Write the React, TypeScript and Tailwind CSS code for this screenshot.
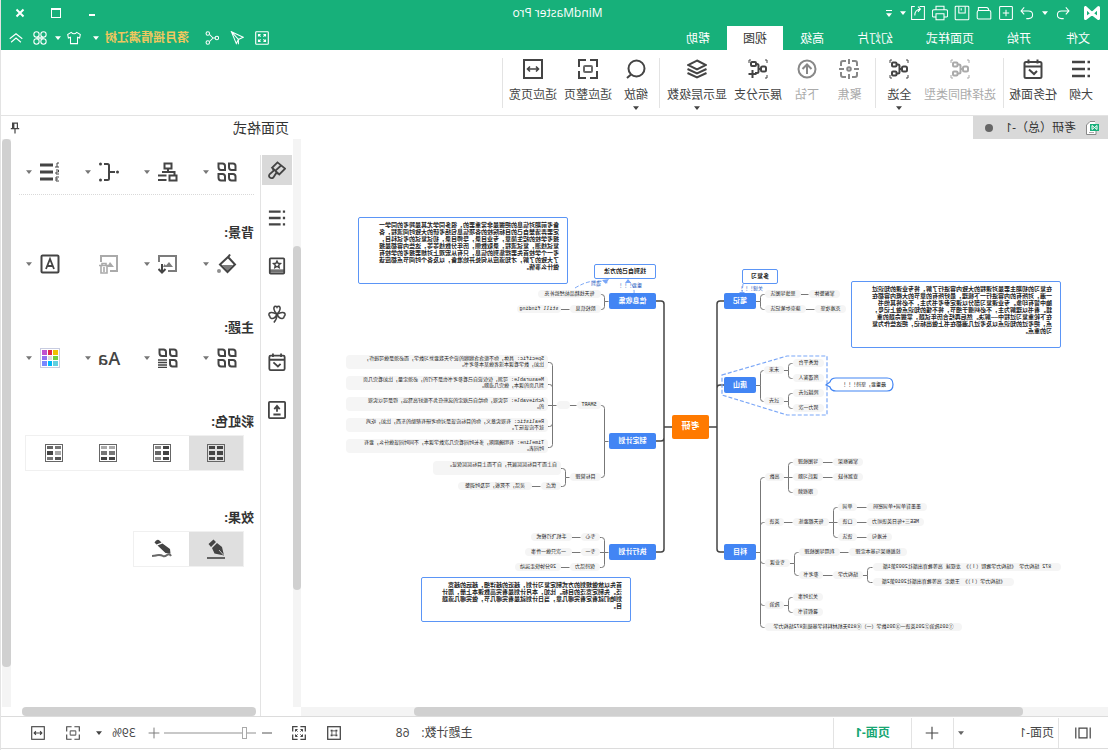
import { useState } from "react";
import type { ReactNode } from "react";
import clsx from "clsx";

type IconProps = { children: ReactNode; className?: string; stroke?: number };

function Icon({ children, className = "h-5 w-5", stroke = 2 }: IconProps) {
  return (
    <svg
      viewBox="0 0 20 20"
      className={clsx("shrink-0", className)}
      fill="none"
      stroke="currentColor"
      strokeWidth={stroke}
      aria-hidden="true"
    >
      {children}
    </svg>
  );
}

function Caret({ className = "h-1 w-1.5" }: { className?: string }) {
  return (
    <svg viewBox="0 0 8 5" className={clsx("shrink-0", className)} fill="currentColor" aria-hidden="true">
      <path d="M0 0h8L4 5z" />
    </svg>
  );
}

/* ---------- Icon drawings, all on a 20x20 grid ---------- */

const tree = (
  <>
    <rect x="2" y="7.500" width="5" height="5" rx="1.500" />
    <rect x="12.500" y="3.500" width="4.500" height="4" rx="1" />
    <rect x="12.500" y="12.500" width="4.500" height="4" rx="1" />
    <path d="M7 10h2.500M13 5.500h-2q-1.500 0-1.500 1.500v6q0 1.500 1.500 1.500h2" />
  </>
);

const icons = {
  outline: (
    <>
      <path strokeWidth="2.600" d="M6 3h13M6 10h13M6 17h13" />
      <path strokeWidth="2.600" d="M1 3h2.500M1 10h2.500M1 17h2.500" />
    </>
  ),
  task: (
    <>
      <rect x="1.500" y="3" width="17" height="16" rx="1.500" />
      <path d="M1.500 7.500h17M5.500 0.500v4M14.500 0.500v4M6 12l3 3 5-4.500" />
    </>
  ),
  same: (
    <>
      <path strokeWidth="1" d="M3 1H1v3M17 1h2v3M19 16v3h-2M3 19H1v-3" />
      {tree}
    </>
  ),
  focus: (
    <>
      <path d="M2 7V4q0-2 2-2h3M13 2h3q2 0 2 2v3M18 13v3q0 2-2 2h-3M7 18H4q-2 0-2-2v-3" />
      <path d="M10 0v5M10 15v5M0 10h5M15 10h5" />
      <circle cx="10" cy="10" r="1.800" />
    </>
  ),
  drill: (
    <>
      <circle cx="10" cy="10" r="8.500" />
      <path d="M10 15V6M5.500 10L10 5.500l4.500 4.500" />
    </>
  ),
  expand: (
    <>
      <path strokeWidth="1" d="M3 1H1v3M17 1h2v3M3 19H1v-3" />
      <rect x="2" y="7.500" width="5" height="5" rx="1.500" />
      <rect x="12" y="3" width="5" height="4" rx="1" />
      <path d="M7 10h2.500M12 5h-1q-1.500 0-1.500 1.500v6q0 1.500 1.500 1.500h2M15.500 11v8M11.500 15h8" />
    </>
  ),
  layers: (
    <>
      <path d="M10 1.500L1 6l9 4.500L19 6z" />
      <path d="M0.500 10L10 14.500 19.500 10M0.500 14L10 18.500 19.500 14" />
    </>
  ),
  zoom: (
    <>
      <circle cx="9.500" cy="9.500" r="8" />
      <path d="M15 15.500l4 3.500" />
    </>
  ),
  fitPage: (
    <>
      <path d="M1 8V1h7M12 1h7v7M19 12v7h-7M8 19H1v-7" />
      <rect x="6" y="7" width="8" height="6" rx="1" opacity="0.8" />
    </>
  ),
  fitWidth: (
    <>
      <rect x="1" y="1" width="18" height="18" />
      <path d="M5 10h10M7 7.500L4.500 10 7 12.500M13 7.500l2.500 2.500-2.500 2.500" strokeWidth="1.600" />
    </>
  ),
  brush: (
    <>
      <path d="M9.500 1.500L1 8.500 7.500 15l8-7.500z" />
      <path d="M5.500 5l6.500 6M14.500 9l-.5 2 4 3.500q2 2.500-.5 4t-4-1L11 13.500l-2 .5" />
    </>
  ),
  star: (
    <>
      <rect x="2" y="1.500" width="16" height="17" rx="1" />
      <path d="M2 14.500h16M2 16.500h16" strokeWidth="1.400" />
      <path d="M10 4.500l1.200 2.500 2.600.300-1.900 1.800.500 2.600-2.400-1.300-2.400 1.300.500-2.600-1.900-1.800 2.600-.300z" strokeWidth="1.600" />
    </>
  ),
  clover: (
    <>
      <path d="M10 10C5.500 6.500 6 1.500 8 1.500q1.500 0 2 1 .5-1 2-1c2 0 2.500 5-2 8.500z" strokeWidth="1.700" />
      <path d="M10 10.500C5 7 1 8 1 10.500q0 1.500 1 2 0 2 2 2.500c3 .5 4.500-1.500 6-4.500z" strokeWidth="1.700" />
      <path d="M10 10.500c5-3.500 9-2.500 9 0q0 1.500-1 2 0 2-2 2.500c-3 .5-4.500-1.500-6-4.500zM10 10.500q0 5 3.500 9" strokeWidth="1.700" />
    </>
  ),
  upload: (
    <>
      <rect x="1" y="1" width="18" height="18" rx="1" />
      <path d="M10 12V6.500M7 9l3-3.500L13 9M6 15h8" />
    </>
  ),
  grid: (
    <path d="M1.500 4q0-2.500 2.500-2.500h4v3.500q0 3-2.500 3h-4zM12 4q0-2.500 2.500-2.500h4v3.500q0 3-2.500 3h-4zM1.500 14.500q0-2.500 2.500-2.500h4v3.500q0 3-2.500 3h-4zM12 14.500q0-2.500 2.500-2.500h4v3.500q0 3-2.500 3h-4z" />
  ),
  gridLines: (
    <>
      <path d="M1.500 4q0-2.500 2.500-2.500h4v3.500q0 3-2.500 3h-4zM12 4q0-2.500 2.500-2.500h4v3.500q0 3-2.500 3h-4zM1.500 14.500q0-2.500 2.500-2.500h4v3.500q0 3-2.500 3h-4z" />
      <path d="M11 12h9M11 14.500h9M11 17h9M11 19.500h9" strokeWidth="1.300" />
    </>
  ),
  org: (
    <>
      <rect x="6.500" y="1.500" width="7" height="5" />
      <path d="M10 6.500v3.500M3.500 13.500V10h12.500M11.500 13.500H20M11.500 18H20" />
      <rect x="1.500" y="13.500" width="7" height="5" />
    </>
  ),
  connector: (
    <>
      <path d="M4 10h6M15 2h-3.500q-1.500 0-1.500 1.500v13q0 1.500 1.500 1.500H15" />
      <g fill="currentColor" stroke="none">
        <circle cx="1.500" cy="10" r="1.500" />
        <circle cx="18.500" cy="2" r="1.500" />
        <circle cx="18.500" cy="18" r="1.500" />
      </g>
    </>
  ),
  numbering: (
    <>
      <path strokeWidth="3" d="M7 3h13M7 10h13M7 17h13" />
      <path strokeWidth="1" d="M1 1h2v4M1 5h4M4 8H1.500v2H4v2H1M1 15h3v4H1M2 17h2" />
    </>
  ),
  fill: (
    <>
      <path d="M7 0.500l2 3M9 3L17 10.500 9.500 18 2 10.500z" />
      <path d="M4 11h11l-5.500 6z" fill="currentColor" stroke="none" opacity="0.7" />
      <circle cx="18" cy="17" r="2" fill="currentColor" stroke="none" opacity="0.6" />
    </>
  ),
  picture: (
    <>
      <path d="M19 8V2H2v15h8" opacity="0.7" />
      <path d="M5 13l4-5 3 3.500 1.500-1.500 1.500 3z" fill="currentColor" stroke="none" opacity="0.7" />
      <path d="M16 10v8M12.500 15l3.500 3.500 3.500-3.500" />
    </>
  ),
  pictureDelete: (
    <>
      <path d="M18 8V2H2v15h7" />
      <path d="M5 13l4-5 3 5z" fill="currentColor" stroke="none" />
      <path d="M10.500 11.500h9.500M13 11V9.500h4V11M12 12v7h6v-7M15 13v5" strokeWidth="1.600" />
    </>
  ),
  watermark: (
    <>
      <rect x="1.500" y="1.500" width="17" height="17" rx="1" />
      <path d="M6 15l4-10 4 10M7.500 12h5" strokeWidth="1.800" />
    </>
  ),
  pen: (
    <>
      <path d="M17.500 5L12.500 0.500 10 3l5 5zM9 4l5 5-2.500 5.500L2 16.500 4 8z" fill="currentColor" stroke="none" />
      <path d="M2.500 16l4.500-5" stroke="#dfdfdf" strokeWidth="0.800" />
      <path d="M1 19h18" opacity="0.8" />
    </>
  ),
  pencil: (
    <>
      <path d="M12 2q3-3 5.500 1.500L15.500 5.500 10.500 3.500zM9.500 4.500l5 2L6.500 14l-5 .5L2 10z" fill="currentColor" stroke="none" />
      <path d="M1 17q1.500-3 4-1t4 1 4-1 3 .5l4 .5" opacity="0.8" />
    </>
  ),
  frame: (
    <>
      <rect x="1" y="1" width="18" height="18" />
      <path d="M6 8V6h2M12 6h2v2M14 12v2h-2M8 14H6v-2" strokeWidth="1.600" />
      <rect x="7" y="7" width="6" height="6" strokeWidth="1.200" />
    </>
  ),
  full: (
    <>
      <path d="M1 8V1h7M12 1h7v7M19 12v7h-7M8 19H1v-7" />
      <path d="M5 8V5h3M5 5l3 3M12 5h3v3M15 5l-3 3M15 12v3h-3M15 15l-3-3M8 15H5v-3M5 15l3-3" strokeWidth="1.400" />
    </>
  ),
};

type IconName = keyof typeof icons;

/* ---------- Title bar ---------- */

const quickActions = [
  { label: "新建", draw: <><rect x="2" y="2" width="16" height="16" rx="1" /><path d="M10 6v8M6 10h8" /></> },
  { label: "打开", draw: <><path d="M1.500 17V9q0-2 2-2h13q2 0 2 2v7q0 1.500-1.500 1.500H2zM4 7q0-4 3-4h10v4" /></> },
  { label: "保存", draw: <><rect x="1.500" y="1.500" width="17" height="17" rx="1" /><path d="M6 2v8h8V2M11 4v3" /></> },
  { label: "打印", draw: <><path d="M5 6V1.500h10V6M5 15H2q-1.500 0-1.500-1.500V8Q.5 6 2.500 6h15q2 0 2 2v5.500Q19.500 15 18 15h-3M5 11h10v7.500H5z" /></> },
  { label: "导出", draw: <><path d="M8 2H2v16h16V2h-4M14 13Q14 6 7 5M10 2L7 5l3 3.500" /></> },
];

const menus = ["文件", "开始", "页面样式", "幻灯片", "高级", "视图", "帮助"];

function TitleBar() {
  const [active, setActive] = useState("视图");

  return (
    <header className="bg-[#17b07a] text-white">
      <div className="flex h-[26px] items-center justify-between">
        <div className="flex flex-1 items-center pl-2">
          <svg viewBox="0 0 16 14" className="mr-3.5 h-3.5 w-4" fill="none" stroke="white" strokeWidth="3" strokeLinejoin="round" aria-hidden="true">
            <path d="M1.500 12.500v-11l6.500 6 6.500-6v11L8 7.500z" />
          </svg>
          <button aria-label="撤销" className="mr-2">
            <Icon className="h-3.5 w-3.5" stroke={1.5}><path d="M6 2L1.500 7 6 12M2 7h10q6 0 6 5.500T12 18H9" /></Icon>
          </button>
          <button aria-label="撤销列表"><Caret /></button>
          <button aria-label="重做" className="ml-2">
            <Icon className="h-3.5 w-3.5" stroke={1.5}><path d="M14 2l4.500 5L14 12M18 7H8q-6 0-6 5.500T8 18h3" /></Icon>
          </button>
          <div className="ml-1.5 flex gap-1.5">
            {quickActions.map((a) => (
              <button key={a.label} aria-label={a.label}>
                <Icon className="h-4 w-4" stroke={1.3}>{a.draw}</Icon>
              </button>
            ))}
          </div>
          <button aria-label="导出列表" className="ml-1"><Caret /></button>
          <button aria-label="自定义" className="ml-2 flex flex-col items-center gap-0.5">
            <span className="h-px w-1.5 bg-white" />
            <Caret />
          </button>
        </div>
        <h1 className="text-xs leading-5">MindMaster Pro</h1>
        <div className="flex flex-1 items-center justify-end gap-[26px] pr-3.5">
          <button aria-label="最小化" className="w-2.5"><span className="mx-auto mt-1 block h-0.5 w-1.5 bg-white" /></button>
          <button aria-label="最大化" className="h-2.5 w-2.5 border border-t-2 border-white" />
          <button aria-label="关闭"><Icon className="h-2.5 w-2.5" stroke={4}><path d="M3 3l14 14M17 3L3 17" /></Icon></button>
        </div>
      </div>
      <div className="flex h-6 items-stretch justify-between">
        <nav className="flex gap-px pl-0.5">
          {menus.map((m) => (
            <button
              key={m}
              onClick={() => setActive(m)}
              className={clsx(
                "px-4 pt-0.5 text-xs first:mr-0.5",
                m === active && "bg-white text-[#333]"
              )}
            >
              {m}
            </button>
          ))}
        </nav>
        <div className="flex items-center pr-2">
          <button aria-label="全屏">
            <Icon className="h-3.5 w-3.5" stroke={1.6}>
              <rect x="1" y="1" width="18" height="18" rx="1" />
              <path d="M5 8V5h3M5 5l3 3M12 5h3v3M15 5l-3 3M15 12v3h-3M15 15l-3-3M8 15H5v-3M5 15l3-3" />
            </Icon>
          </button>
          <button aria-label="发送" className="ml-[11px]">
            <Icon className="h-3.5 w-3.5" stroke={1.5}><path d="M18 1L1 9l7 3 3 6zM18 1L8 12v7" /></Icon>
          </button>
          <button aria-label="分享" className="ml-[11px]">
            <Icon className="h-3.5 w-3.5" stroke={1.5}>
              <circle cx="3" cy="10" r="2.500" /><circle cx="16" cy="3.500" r="2.500" /><circle cx="16" cy="16.500" r="2.500" />
              <path d="M5.500 10h3l5-5M8.500 10l5 5" />
            </Icon>
          </button>
          <button className="ml-4 flex items-center gap-1.5 text-xs font-bold text-[#f0c75e]">
            落月摇情满江树
            <Caret className="h-1 w-1.5 text-white" />
          </button>
          <button aria-label="皮肤" className="ml-3">
            <Icon className="h-3.5 w-3.5" stroke={1.5}><path d="M6 2L1 5l1 5 3-1v9h10V9l3 1 1-5-5-3q-4 4-8 0z" /></Icon>
          </button>
          <button aria-label="皮肤列表" className="ml-1.5"><Caret /></button>
          <button aria-label="应用" className="ml-2">
            <Icon className="h-3.5 w-3.5" stroke={1.5}>
              <circle cx="5" cy="5" r="3.800" /><circle cx="15" cy="5" r="3.800" /><circle cx="5" cy="15" r="3.800" /><circle cx="15" cy="15" r="3.800" />
              <path d="M5 9h10M5 11h10" />
            </Icon>
          </button>
          <button aria-label="收起功能区" className="ml-2.5">
            <Icon className="h-3.5 w-3.5" stroke={1.6}><path d="M1 11l9-7 9 7M3 16l7-6 7 6" /></Icon>
          </button>
        </div>
      </div>
    </header>
  );
}

/* ---------- Ribbon ---------- */

type Tool = { label: string; icon: IconName; width: string; disabled?: boolean; menu?: boolean };

const ribbon: { pad: string; tools: Tool[] }[] = [
  {
    pad: "pl-2",
    tools: [
      { label: "大纲", icon: "outline", width: "w-[38px]" },
      { label: "任务面板", icon: "task", width: "w-[58px]" },
    ],
  },
  {
    pad: "pr-1.5",
    tools: [
      { label: "选择相同类型", icon: "same", width: "w-[86px]", disabled: true },
      { label: "全选", icon: "same", width: "w-[35px]", menu: true },
    ],
  },
  {
    pad: "pl-1 pr-1",
    tools: [
      { label: "聚焦", icon: "focus", width: "w-[43px]", disabled: true },
      { label: "下钻", icon: "drill", width: "w-[42px]", disabled: true },
      { label: "展示分支", icon: "expand", width: "w-[56px]" },
      { label: "显示层级数", icon: "layers", width: "w-[66px]", menu: true },
    ],
  },
  {
    pad: "",
    tools: [
      { label: "缩放", icon: "zoom", width: "w-[46px]", menu: true },
      { label: "适应整页", icon: "fitPage", width: "w-[50px]" },
      { label: "适应页宽", icon: "fitWidth", width: "w-[60px]" },
    ],
  },
];

function Ribbon() {
  return (
    <div className="flex h-[66px] items-center border-b border-[#e3e3e3]">
      {ribbon.map((group, i) => (
        <div key={i} className={clsx("flex h-[50px] border-r border-[#e3e3e3]", group.pad)}>
          {group.tools.map((t) => (
            <button
              key={t.label}
              disabled={t.disabled}
              className={clsx("flex flex-col items-center pt-px", t.width, t.disabled ? "text-[#aaa]" : "text-[#444]")}
            >
              <Icon className={clsx("h-5 w-5", (t.icon === "drill" || t.icon === "focus") && "text-[#888]")}>
                {icons[t.icon]}
              </Icon>
              <span className="mt-1.5 text-xs leading-5 whitespace-nowrap">{t.label}</span>
              {t.menu && <Caret className="mt-px h-1 w-1.5" />}
            </button>
          ))}
        </div>
      ))}
    </div>
  );
}

/* ---------- Mind map ---------- */

// left, vertical centre, width, text
type NodeSpec = [number, number, number, string];

const nodes: NodeSpec[] = [
  [307, 155, 36, "思维导图法"],
  [268, 155, 31, "掌握整体"],
  [302, 170, 41, "康奈尔笔记法"],
  [262, 170, 31, "克难攻坚"],
  [324, 231, 20, "未来"],
  [324, 262, 20, "过去"],
  [284, 224, 31, "优秀平台"],
  [284, 239, 31, "所遇客人"],
  [284, 254, 31, "跨越过去"],
  [284, 269, 31, "努力一次"],
  [324, 338, 19, "高数"],
  [285, 323, 30, "导图梳理"],
  [285, 338, 30, "课后习题"],
  [290, 353, 25, "跟视频"],
  [245, 323, 30, "掌握框架"],
  [245, 338, 30, "查漏补缺"],
  [324, 383, 19, "英语"],
  [279, 383, 36, "每天都要练"],
  [251, 368, 19, "单词"],
  [251, 383, 19, "口语"],
  [251, 398, 19, "语法"],
  [181, 368, 60, "墨墨背单词+单词密码"],
  [184, 383, 57, "MEE三+每日英语听力"],
  [216, 398, 25, "长难句"],
  [318, 424, 25, "专业课"],
  [268, 413, 41, "利用导图梳理"],
  [201, 413, 58, "挖掘框架与基本定理"],
  [285, 436, 24, "参考书"],
  [245, 436, 30, "结构力学"],
  [47, 428, 188, "872 结构力学 《结构力学教程（Ⅰ）》 龙驭球 高等教育出版社2003第1版"],
  [94, 443, 141, "《结构力学（Ⅰ）》 王焕定 高等教育出版社2010第2版"],
  [324, 466, 19, "政治"],
  [285, 458, 30, "关注时事"],
  [285, 473, 30, "暑假背书"],
  [146, 488, 197, "①101政治②201英语一③301数学（一）④819无机材料科学基础或872结构力学"],
  [507, 155, 63, "每天找精品帖经验补充"],
  [507, 170, 31, "院校信息"],
  [547, 170, 44, "still finding"],
  [507, 266, 24, "SMART"],
  [538, 266, 13, ""],
  [507, 338, 31, "目标管理"],
  [547, 347, 20, "优点"],
  [576, 347, 74, "灵活，不死板，可及时调整"],
  [508, 398, 19, "专心"],
  [536, 398, 41, "手机飞行模式"],
  [508, 413, 19, "专一"],
  [536, 413, 47, "一次只做一件事"],
  [508, 428, 30, "保持活力"],
  [547, 428, 46, "20分钟快走运动"],
];

const paragraphs: [number, number, number, string[]][] = [
  [560, 216, 202, ["Specific: 具体，你不能含含糊糊的说今天我要复习数学，而必须是做可操作，", "比如，数学看课本或者做某本参考书。"]],
  [560, 237, 202, ["Measurable: 可测，仅仅说自己看参考书也是不行的，必须定量，比如看完几页", "到几页的课本，做完几道题。"]],
  [560, 258, 202, ["Achievable: 可实现，你给自己规定的这些任务不能好高骛远，得是可以实现", "的。"]],
  [560, 279, 202, ["Realistic: 有现实意义，你的目标应该是对你考研有帮助的东西，比如，吃鸡", "就不应该玩了。"]],
  [560, 300, 202, ["Timeline: 有明确期限，多长时间看完几次数学课本，不同时间该做什么，要有", "时间表。"]],
  [547, 322, 128, ["自上而下目标层层展开，自下而上目标层层保证。", "\u00a0"]],
];

const topics: NodeSpec[] = [
  [352, 162, 32, "笔记"],
  [352, 246, 32, "唐山"],
  [352, 413, 32, "科目"],
  [452, 162, 47, "信息收集"],
  [452, 302, 47, "制定计划"],
  [452, 413, 47, "执行计划"],
];

const notes = [
  {
    place: "left-[47px] top-[142px] h-[67px]",
    lines: [
      "在复习的初期主要是对课程的大致内容进行了解，将专业课的知识过",
      "一遍，对所有的内容进行一下梳理，最好所有的章节的大概内容都在",
      "脑中留有印象。专业课复习部分以课定参考书为主，不必将其他书",
      "籍。看书以理解为主，不必纠缠于细节，将不懂的知识点做上记号，",
      "在下轮重复习过程中——解决。然后再结合历年试题，掌握命题的重",
      "点，把考过的知识点以及考过几遍都在书上做出标记，把这些作为复",
      "习的重点。",
    ],
  },
  {
    place: "left-[540px] top-[78px] h-[67px]",
    lines: [
      "备考前期对信息的把握是非常重要的，很多同学尤其是跨考的同学一",
      "定要弄清楚自己的目标院校的各项信息包括考研的大致时间流程，各",
      "报考学校的招生简章，专业目录，导师目录，初试复试的考试科目，",
      "复试线测，复试流程，录取数侧，历年分数线等等，这些内容都是报",
      "考一个学校首先要搜集到的信息，只有从宏观上对想要报考的学校有",
      "了大致的了解，才知道应从何处开始准备，以及各个时间节点都应该",
      "做什么事情。",
    ],
  },
  {
    place: "left-[477px] top-[438px] h-[45px]",
    lines: [
      "首先以放做规划的方式制定复习计划，越近的越详细，越远的越宽",
      "泛。先制定宽泛的目标。比如，本月计划是看完高数课本上册，周计",
      "划咱们就看定看完哪几章，当日计划就是看完哪几节，做完哪几道题",
      "目。",
    ],
  },
];

// A parent at (x, y), a spine at sx, and children at (cx, each of ys)
function fork(x: number, y: number, sx: number, cx: number, ys: number[]) {
  const r = cx > sx ? 3 : -3;
  const parts = [`M${x} ${y}H${sx}`];
  ys.forEach((cy) => {
    if (cy === y) parts.push(`M${sx} ${y}H${cx}`);
    else {
      const v = cy < y ? cy + 3 : cy - 3;
      parts.push(`M${sx} ${y}V${v}Q${sx} ${cy} ${sx + r} ${cy}H${cx}`);
    }
  });
  return parts.join("");
}

const trunk = [
  fork(400, 288, 391, 384, [162, 246, 413]),
  fork(436, 288, 444, 452, [162, 302, 413]),
].join("");

const branches = [
  fork(352, 162, 347, 343, [155, 170]),
  fork(352, 246, 347, 344, [231, 262]),
  fork(324, 231, 319, 315, [224, 239]),
  fork(324, 262, 319, 315, [254, 269]),
  fork(352, 413, 347, 343, [338, 383, 424, 466, 488]),
  fork(324, 338, 319, 315, [323, 338, 353]),
  fork(279, 383, 274, 270, [368, 383, 398]),
  fork(318, 424, 313, 309, [413, 436]),
  fork(245, 436, 240, 235, [428, 443]),
  fork(324, 466, 319, 315, [458, 473]),
  fork(499, 162, 503, 507, [155, 170]),
  fork(499, 302, 503, 507, [266, 338]),
  fork(551, 266, 555, 560, [223, 245, 266, 287, 308]),
  fork(538, 338, 542, 547, [329, 347]),
  fork(499, 413, 503, 508, [398, 413, 428]),
  "M307 155h-8M302 170h-9M285 323h-10M285 338h-10M324 383h-9",
  "M251 368h-10M251 383h-10M251 398h-10M268 413h-9M285 436h-10",
  "M538 170h9M531 266h7M567 347h9M527 398h9M527 413h9M538 428h9",
].join("");

function MindMap() {
  return (
    <div className="relative h-full w-full overflow-hidden bg-white font-['Liberation_Mono','Noto_Sans_CJK_SC',monospace] text-[5px] leading-[6px] text-[#222]">
      <svg className="absolute top-0 left-0" width="807" height="568" fill="none" aria-hidden="true">
        <path d={trunk} stroke="#444" strokeWidth="1.500" />
        <path d={branches} stroke="#777" transform="translate(0.500 0.500)" />
        <g stroke="#7ba7f7" strokeDasharray="4 2">
          <path d="M386 236L321 217h-40v59h40l65-20z" strokeWidth="1.200" />
          <path d="M533 149Q515 138 500 144" />
          <path d="M365 145l1 9M474 155q-1-8 6-14" />
        </g>
        <path d="M499 140l7 1-4 4zM477 144l6 0-3-4zM363 153h6l-3 3z" fill="#7ba7f7" />
        <path
          d="M282 246L278 243q-1-4-6-4h-51q-6 0-6 6.500t6 6.500h51q5 0 6-4z"
          fill="white"
          stroke="#4285f4"
          strokeWidth="1.200"
        />
      </svg>

      {nodes.map(([x, y, w, text], i) => (
        <span
          key={i}
          className="absolute flex h-2 items-center justify-center rounded-sm bg-[#f5f5f5] whitespace-nowrap"
          style={{ left: x, top: y - 4, width: w }}
        >
          {text}
        </span>
      ))}

      {paragraphs.map(([x, y, w, lines]) => (
        <p key={y} className="absolute rounded-sm bg-[#f5f5f5] px-1 py-px whitespace-nowrap" style={{ left: x, top: y, width: w }}>
          {lines.map((line) => (
            <span key={line} className="block">{line}</span>
          ))}
        </p>
      ))}

      {topics.map(([x, y, w, text]) => (
        <span
          key={text}
          className="absolute flex h-4 items-center justify-center rounded-xs bg-[#4285f4] text-[7px] font-bold text-white"
          style={{ left: x, top: y - 8, width: w }}
        >
          {text}
        </span>
      ))}

      <span className="absolute top-[276px] left-[399px] flex h-6 w-[37px] items-center justify-center rounded-xs bg-[#ff7a00] text-[9px] font-bold text-white">
        考研
      </span>

      {notes.map((note) => (
        <p
          key={note.place}
          className={clsx(
            "absolute w-[210px] rounded-xs border border-[#5b95f6] bg-white px-2 py-1 text-[6px] leading-[7px] font-bold whitespace-nowrap text-[#222]",
            note.place
          )}
        >
          {note.lines.map((line) => (
            <span key={line} className="block">{line}</span>
          ))}
        </p>
      ))}

      <span className="absolute top-[130px] left-[330px] flex h-[15px] w-9 items-center justify-center rounded-xs border border-[#5b95f6] bg-white text-[6px] font-bold">
        多复习
      </span>
      <span className="absolute top-[125px] left-[452px] flex h-[15px] w-[62px] items-center justify-center rounded-xs border border-[#5b95f6] bg-white text-[6px] font-bold">
        找到自己的方法
      </span>
      <span className="absolute top-[147px] left-[345px] text-[#2f62c0]">关键！！！</span>
      <span className="absolute top-[144px] left-[466px] text-[#2f62c0]">重要！！！</span>
      <span className="absolute top-[142px] left-[507px] text-[#2f62c0]">遇到</span>
      <span className="absolute top-[243px] left-[222px]">最重要，坚持！！！</span>
    </div>
  );
}

function DocumentArea() {
  return (
    <main className="flex min-w-0 flex-1 flex-col">
      <div className="flex h-[23px] shrink-0">
        <button className="flex w-[135px] items-center bg-[#d9d9d9] pl-2 text-xs text-[#333]">
          <svg viewBox="0 0 14 14" className="h-3.5 w-3.5" fill="none" aria-hidden="true">
            <path d="M5 .5h5l3.500 3.500v9.500H4V10" stroke="#888" fill="white" />
            <path d="M6 11.500h5" stroke="#aaa" />
            <rect x="1" y="3" width="9" height="7" fill="#17b07a" />
            <path d="M3 8.500v-4l2.500 2 2.500-2v4l-2.500-2z" stroke="white" />
          </svg>
          <span className="ml-2.5 whitespace-nowrap">考研（总）-1</span>
          <span className="mr-3 ml-auto h-2 w-2 rounded-full bg-[#666]" />
        </button>
      </div>
      <div className="flex min-h-0 flex-1">
        <div className="min-w-0 flex-1"><MindMap /></div>
        <div className="w-2 bg-[#f4f4f4] pt-[107px]">
          <div className="h-[344px] rounded bg-[#d0d0d0]" />
        </div>
      </div>
      <div className="mr-2 h-[9px] shrink-0 bg-[#f4f4f4] pl-[85px]">
        <div className="h-[9px] w-[609px] rounded bg-[#d0d0d0]" />
      </div>
    </main>
  );
}

/* ---------- Format panel ---------- */

const sideTabs: [IconName, string][] = [
  ["brush", "页面格式"],
  ["outline", "大纲"],
  ["star", "图标"],
  ["clover", "剪贴画"],
  ["task", "任务"],
  ["upload", "导出"],
];

const swatches = ["#f0c000", "#e02850", "#c050d0", "#70d040", "#dcdcdc", "#9070f0", "#60d0e0", "#00b8f8", "#7888ff"];

const rainbow = [
  ["#444", "#444", "#444", "#444", "#444", "#444"],
  ["#444", "#888", "#444", "#666", "#444", "#888"],
  ["#aaa", "#aaa", "#777", "#777", "#444", "#444"],
  ["#777", "#666", "#aaa", "#444", "#555", "#777"],
];

function FormatButton({ label, children, menu = true }: { label: string; children: ReactNode; menu?: boolean }) {
  return (
    <button aria-label={label} className="flex h-5 w-[59px] shrink-0 items-center gap-2 text-[#444]">
      {children}
      {menu && <Caret className="h-1 w-1.5 text-[#777]" />}
    </button>
  );
}

function FormatPanel() {
  const [tab, setTab] = useState("页面格式");
  const [colorMode, setColorMode] = useState(0);
  const [effect, setEffect] = useState("pen");

  return (
    <aside className="flex w-[292px] shrink-0 flex-col">
      <div className="flex h-[23px] shrink-0 items-center justify-between pr-2 pl-1">
        <h2 className="text-sm leading-5 text-[#333]">页面格式</h2>
        <button aria-label="固定面板" className="text-[#444]">
          <Icon className="h-3 w-3" stroke={2}><path d="M5 2h10M6 2v9M14 2v9M3 11h14M10 11v8M12 3v8" /></Icon>
        </button>
      </div>
      <div className="flex min-h-0 flex-1">
        <div className="w-[33px] shrink-0 pt-4 pl-px">
          <div className="flex h-full flex-col gap-[18px] border-r border-[#e3e3e3]">
            {sideTabs.map(([icon, label]) => (
              <button
                key={label}
                aria-label={label}
                onClick={() => setTab(label)}
                className={clsx("flex h-[30px] w-[30px] items-center justify-center text-[#444]", tab === label && "bg-[#d9d9d9]")}
              >
                <Icon className="h-[18px] w-[18px]">{icons[icon]}</Icon>
              </button>
            ))}
          </div>
        </div>
        <div className="flex min-w-0 flex-1 flex-col">
          <div className="min-h-0 flex-1 overflow-hidden pr-2 pl-1.5">
            <div className="flex border-b border-dotted border-[#d9d9d9] pt-[23px] pb-3 pl-[17px]">
              <FormatButton label="布局"><Icon>{icons.grid}</Icon></FormatButton>
              <FormatButton label="结构"><Icon>{icons.org}</Icon></FormatButton>
              <FormatButton label="连线"><Icon>{icons.connector}</Icon></FormatButton>
              <FormatButton label="编号"><Icon>{icons.numbering}</Icon></FormatButton>
            </div>
            <h3 className="mt-[27px] text-[13px] leading-5 font-bold text-[#333]">背景:</h3>
            <div className="mt-3 flex pl-[17px]">
              <FormatButton label="背景颜色"><Icon>{icons.fill}</Icon></FormatButton>
              <FormatButton label="背景图片"><Icon>{icons.picture}</Icon></FormatButton>
              <FormatButton label="删除背景图片" menu={false}><Icon className="h-5 w-5 text-[#aaa]">{icons.pictureDelete}</Icon></FormatButton>
              <FormatButton label="水印"><Icon>{icons.watermark}</Icon></FormatButton>
            </div>
            <h3 className="mt-[43px] text-[13px] leading-5 font-bold text-[#333]">主题:</h3>
            <div className="mt-[11px] flex pl-[17px]">
              <FormatButton label="主题"><Icon>{icons.grid}</Icon></FormatButton>
              <FormatButton label="主题样式"><Icon>{icons.gridLines}</Icon></FormatButton>
              <FormatButton label="主题字体">
                <span className="flex w-5 justify-center text-lg leading-5 font-semibold">Aa</span>
              </FormatButton>
              <FormatButton label="主题颜色">
                <span className="grid h-5 w-5 shrink-0 grid-cols-3 gap-px border border-[#c8cce0] p-px">
                  {swatches.map((c) => (
                    <span key={c} style={{ backgroundColor: c }} />
                  ))}
                </span>
              </FormatButton>
            </div>
            <h3 className="mt-[43px] text-[13px] leading-5 font-bold text-[#333]">彩虹色:</h3>
            <div className="mt-1 ml-2.5 flex h-9 w-[219px] border border-[#f0f0f0]">
              {rainbow.map((cells, i) => (
                <button
                  key={i}
                  aria-label={`彩虹色 ${i + 1}`}
                  onClick={() => setColorMode(i)}
                  className={clsx("flex w-[54px] items-center justify-center", colorMode === i && "bg-[#dfdfdf]")}
                >
                  <span className="grid h-[18px] w-[18px] grid-cols-2 gap-0.5 border border-[#666] p-px">
                    {cells.map((c, j) => (
                      <span key={j} style={{ backgroundColor: c }} />
                    ))}
                  </span>
                </button>
              ))}
            </div>
            <h3 className="mt-9 text-[13px] leading-5 font-bold text-[#333]">效果:</h3>
            <div className="mt-1 ml-2.5 flex h-9 w-[111px] border border-[#f0f0f0]">
              {(["pen", "pencil"] as const).map((e) => (
                <button
                  key={e}
                  aria-label={e === "pen" ? "标准" : "手绘"}
                  onClick={() => setEffect(e)}
                  className={clsx("flex w-[54px] items-center justify-center text-[#444]", effect === e && "bg-[#dfdfdf]")}
                >
                  <Icon>{icons[e]}</Icon>
                </button>
              ))}
            </div>
          </div>
          <div className="ml-1 h-[9px] w-[234px] rounded bg-[#d0d0d0]" />
        </div>
        <div className="mb-[9px] w-[9px] shrink-0 bg-[#f4f4f4]">
          <div className="h-[528px] rounded bg-[#d0d0d0]" />
        </div>
        <div className="w-px" />
      </div>
    </aside>
  );
}

/* ---------- Status bar ---------- */

function StatusBar() {
  const [zoom, setZoom] = useState(39);

  return (
    <footer className="flex h-[33px] shrink-0 items-center border-y border-[#dcdcdc] pr-[30px] text-xs text-[#444]">
      <button aria-label="页面列表" className="ml-[17px]">
        <Icon className="h-4 w-4" stroke={1.5}><path d="M1 3v14M19 3v14M5 4h10v12H5z" /></Icon>
      </button>
      <label className="ml-4 flex h-[30px] items-center border-l border-[#e3e3e3] pl-1">
        <select aria-label="当前页面" className="w-[90px] appearance-none bg-transparent">
          <option>页面-1</option>
        </select>
        <Caret className="h-1.5 w-1.5 text-[#666]" />
      </label>
      <button aria-label="添加页面" className="ml-1 flex h-[30px] w-[43px] items-center justify-center border-x border-[#e3e3e3]">
        <Icon className="h-3.5 w-3.5" stroke={1.6}><path d="M10 1v18M1 10h18" /></Icon>
      </button>
      <button className="h-[30px] w-[78px] border-r border-[#e3e3e3] font-bold text-[#17a673]">页面-1</button>
      <div className="ml-auto flex items-center">
        <span>主题计数:</span>
        <span className="ml-3">68</span>
        <button aria-label="适应窗口" className="ml-[55px]"><Icon className="h-3.5 w-3.5" stroke={1.8}>{icons.frame}</Icon></button>
        <button aria-label="全屏" className="ml-[21px]"><Icon className="h-3.5 w-3.5" stroke={1.8}>{icons.full}</Icon></button>
        <button aria-label="缩小" className="ml-5 w-2.5 text-[#999]" onClick={() => setZoom(zoom - 1)}>
          <span className="block h-0.5 bg-[#aaa]" />
        </button>
        <input
          type="range"
          aria-label="缩放比例"
          min={10}
          max={300}
          value={zoom}
          onChange={(e) => setZoom(Number(e.target.value))}
          className="ml-1.5 h-0.5 w-[92px] appearance-none bg-[#c8c8c8] [&::-webkit-slider-thumb]:h-3 [&::-webkit-slider-thumb]:w-[5px] [&::-webkit-slider-thumb]:appearance-none [&::-webkit-slider-thumb]:border [&::-webkit-slider-thumb]:border-[#aaa] [&::-webkit-slider-thumb]:bg-white"
        />
        <button aria-label="放大" className="ml-1 text-[#777]" onClick={() => setZoom(zoom + 1)}>
          <Icon className="h-3 w-3" stroke={1.6}><path d="M10 1v18M1 10h18" /></Icon>
        </button>
        <button className="ml-3 flex items-center gap-2.5">
          {zoom}%
          <Caret className="h-1 w-1.5" />
        </button>
        <button aria-label="适应整页" className="ml-4"><Icon className="h-3.5 w-3.5" stroke={1.6}>{icons.fitPage}</Icon></button>
        <button aria-label="适应页宽" className="ml-[21px]"><Icon className="h-3.5 w-3.5" stroke={1.6}>{icons.fitWidth}</Icon></button>
      </div>
    </footer>
  );
}

export default function App() {
  return (
    <div className="flex h-screen -scale-x-100 flex-col overflow-hidden border-r border-[#e3e3e3] bg-white pb-px font-['Open_Sans','Noto_Sans_CJK_SC',sans-serif]">
      <TitleBar />
      <Ribbon />
      <div className="flex min-h-0 flex-1">
        <DocumentArea />
        <FormatPanel />
      </div>
      <StatusBar />
    </div>
  );
}
